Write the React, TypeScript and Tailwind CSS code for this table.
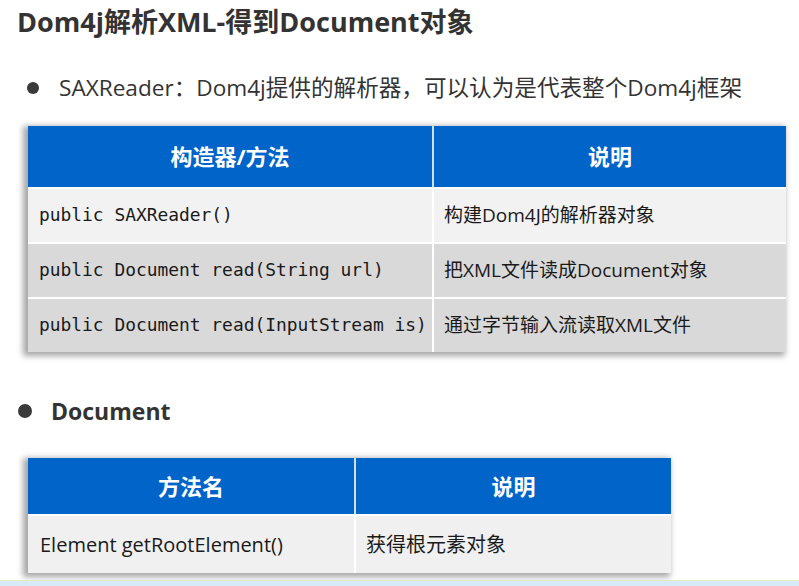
import React from "react";

const sans = "font-['Open_Sans','Noto_Sans_CJK_SC',sans-serif]";
const mono = "font-['DejaVu_Sans_Mono','Noto_Sans_CJK_SC',monospace]";

export default function App() {
  const rows1 = [
    { m: "public SAXReader()", d: "构建Dom4J的解析器对象", bg: "bg-[#f2f2f2]" },
    { m: "public Document read(String url)", d: "把XML文件读成Document对象", bg: "bg-[#d9d9d9]" },
    { m: "public Document read(InputStream is)", d: "通过字节输入流读取XML文件", bg: "bg-[#d9d9d9]" },
  ];
  return (
    <div className={`w-[799px] h-[586px] bg-white overflow-hidden flex flex-col ${sans}`}>
      <div className="h-[44px] pl-[17px] flex items-center text-[27px] font-bold text-[#333333]">
        Dom4j解析XML-得到Document对象
      </div>

      <div className="mt-[24px] h-[40px] flex items-center pl-[27px]">
        <div className="w-[12px] h-[12px] rounded-full bg-[#3a3a3a]" />
        <div className="ml-[20px] text-[22.6px] text-[#333333]">
          SAXReader：Dom4j提供的解析器，可以认为是代表整个Dom4j框架
        </div>
      </div>

      <div className="mt-[18px] ml-[28px] w-[758px] flex flex-col shadow-[-3px_2px_6px_2px_rgba(0,0,0,0.35)]">
        <div className="h-[61px] flex bg-[#0064c8] text-white font-bold text-[22px]">
          <div className="w-[406px] flex items-center justify-center border-r-2 border-[#cfe0f5]">构造器/方法</div>
          <div className="flex-1 flex items-center justify-center">说明</div>
        </div>
        {rows1.map((r, i) => (
          <div key={i} className={`h-[55px] flex border-t-2 border-white ${r.bg}`}>
            <div className={`w-[406px] flex items-center pl-[11px] border-r-2 border-white text-[17.9px] text-[#1a1a1a] ${mono}`}>
              {r.m}
            </div>
            <div className="flex-1 flex items-center pl-[10px] text-[19px] text-[#1a1a1a]">{r.d}</div>
          </div>
        ))}
      </div>

      <div className="mt-[39px] h-[40px] flex items-center pl-[18px]">
        <div className="w-[14px] h-[14px] rounded-full bg-[#3a3a3a]" />
        <div className="ml-[19px] text-[23px] font-bold text-[#333333]">Document</div>
      </div>

      <div className="mt-[27px] ml-[28px] w-[643px] flex flex-col shadow-[-3px_2px_6px_2px_rgba(0,0,0,0.35)]">
        <div className="h-[56px] flex bg-[#0064c8] text-white font-bold text-[22px]">
          <div className="w-[328px] flex items-center justify-center border-r-2 border-[#cfe0f5]">方法名</div>
          <div className="flex-1 flex items-center justify-center">说明</div>
        </div>
        <div className="h-[59px] flex bg-[#f0f0f0] border-t-2 border-white">
          <div className="w-[328px] flex items-center pl-[12px] border-r-2 border-white text-[20px] text-[#1a1a1a]">
            Element getRootElement()
          </div>
          <div className="flex-1 flex items-center pl-[10px] text-[20px] text-[#1a1a1a]">获得根元素对象</div>
        </div>
      </div>

      <div className="mt-[7px] h-[1px] bg-[#e3ecc0]" />
      <div className="flex-1 bg-[#d6ebf7]" />
    </div>
  );
}
